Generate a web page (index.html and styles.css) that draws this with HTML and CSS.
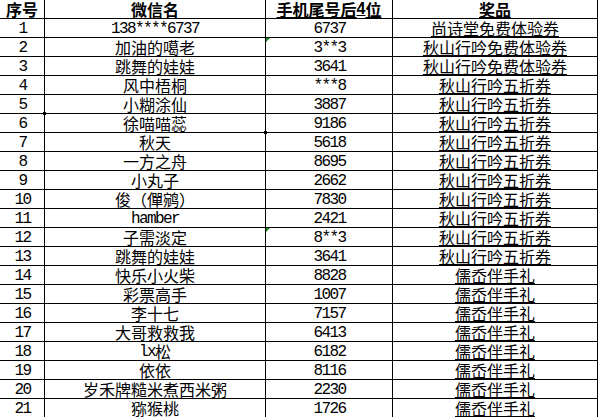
FILE: index.html
```html
<!DOCTYPE html>
<html lang="zh-CN">
<head>
<meta charset="utf-8">
<title>中奖名单</title>
<link rel="stylesheet" href="styles.css">
</head>
<body>
<div class="sheet">
  <div class="c h">序号</div><div class="c h">微信名</div><div class="c h u">手机尾号后<span class="hd">4</span>位</div><div class="c h u">奖品</div>

  <div class="c n">1</div><div class="c"><span class="lat">138****6737</span></div><div class="c n">6737</div><div class="c p">尚诗堂免费体验券</div>
  <div class="c n">2</div><div class="c">加油的噶老</div><div class="c n flag">3**3</div><div class="c p">秋山行吟免费体验券</div>
  <div class="c n">3</div><div class="c">跳舞的娃娃</div><div class="c n">3641</div><div class="c p">秋山行吟免费体验券</div>
  <div class="c n">4</div><div class="c">风中梧桐</div><div class="c n">***8</div><div class="c p">秋山行吟五折券</div>
  <div class="c n">5</div><div class="c">小糊涂仙</div><div class="c n">3887</div><div class="c p">秋山行吟五折券</div>
  <div class="c n">6</div><div class="c sel">徐喵喵蕊</div><div class="c n">9186</div><div class="c p">秋山行吟五折券</div>
  <div class="c n">7</div><div class="c">秋天</div><div class="c n">5618</div><div class="c p">秋山行吟五折券</div>
  <div class="c n">8</div><div class="c">一方之舟</div><div class="c n">8695</div><div class="c p">秋山行吟五折券</div>
  <div class="c n">9</div><div class="c">小丸子</div><div class="c n">2662</div><div class="c p">秋山行吟五折券</div>
  <div class="c n">10</div><div class="c">俊（僤鹓）</div><div class="c n">7830</div><div class="c p">秋山行吟五折券</div>
  <div class="c n">11</div><div class="c"><span class="lat">hamber</span></div><div class="c n">2421</div><div class="c p">秋山行吟五折券</div>
  <div class="c n">12</div><div class="c">子需淡定</div><div class="c n flag">8**3</div><div class="c p">秋山行吟五折券</div>
  <div class="c n">13</div><div class="c">跳舞的娃娃</div><div class="c n">3641</div><div class="c p">秋山行吟五折券</div>
  <div class="c n">14</div><div class="c">快乐小火柴</div><div class="c n">8828</div><div class="c p">儒岙伴手礼</div>
  <div class="c n">15</div><div class="c">彩票高手</div><div class="c n">1007</div><div class="c p">儒岙伴手礼</div>
  <div class="c n">16</div><div class="c">李十七</div><div class="c n">7157</div><div class="c p">儒岙伴手礼</div>
  <div class="c n">17</div><div class="c">大哥救救我</div><div class="c n">6413</div><div class="c p">儒岙伴手礼</div>
  <div class="c n">18</div><div class="c"><span class="lat">lx</span>松</div><div class="c n">6182</div><div class="c p">儒岙伴手礼</div>
  <div class="c n">19</div><div class="c">依依</div><div class="c n">8116</div><div class="c p">儒岙伴手礼</div>
  <div class="c n">20</div><div class="c">岁禾牌糙米煮西米粥</div><div class="c n">2230</div><div class="c p">儒岙伴手礼</div>
  <div class="c n">21</div><div class="c">猕猴桃</div><div class="c n">1726</div><div class="c p">儒岙伴手礼</div>
</div>
</body>
</html>
```
FILE: styles.css
```css
html, body {
  margin: 0;
  padding: 0;
  background: #fff;
}

.sheet {
  display: grid;
  grid-template-columns: 45px 221px 127px 205px;
  grid-auto-rows: 19px;
  width: 598px;
  font-family: "Noto Sans CJK SC", "Liberation Sans", sans-serif;
  font-size: 16px;
  color: #000;
}

.c {
  position: relative;
  box-sizing: border-box;
  border-right: 1px solid #000;
  border-bottom: 1px solid #000;
  display: flex;
  align-items: center;
  justify-content: center;
  line-height: 18px;
  white-space: nowrap;
}

.h {
  font-weight: bold;
  font-size: 16px;
}

.u {
  text-decoration: underline;
  text-underline-offset: 1px;
}

.hd {
  font-family: "Liberation Sans", sans-serif;
}

.p {
  text-decoration: underline;
  text-underline-offset: 1px;
}

.n,
.lat {
  font-family: "Liberation Mono", monospace;
  letter-spacing: -1.6px;
  padding-top: 1px;
}

.n {
  padding-left: 1px;
}

.flag::before {
  content: "";
  position: absolute;
  left: 0;
  top: 0;
  width: 0;
  height: 0;
  border-top: 4px solid #1a8a1a;
  border-right: 4px solid transparent;
}

.sel::before,
.sel::after {
  content: "";
  position: absolute;
  width: 3px;
  height: 3px;
  background: #000;
}

.sel::before {
  left: -2px;
  top: -2px;
}

.sel::after {
  right: -2px;
  bottom: -2px;
}
```
